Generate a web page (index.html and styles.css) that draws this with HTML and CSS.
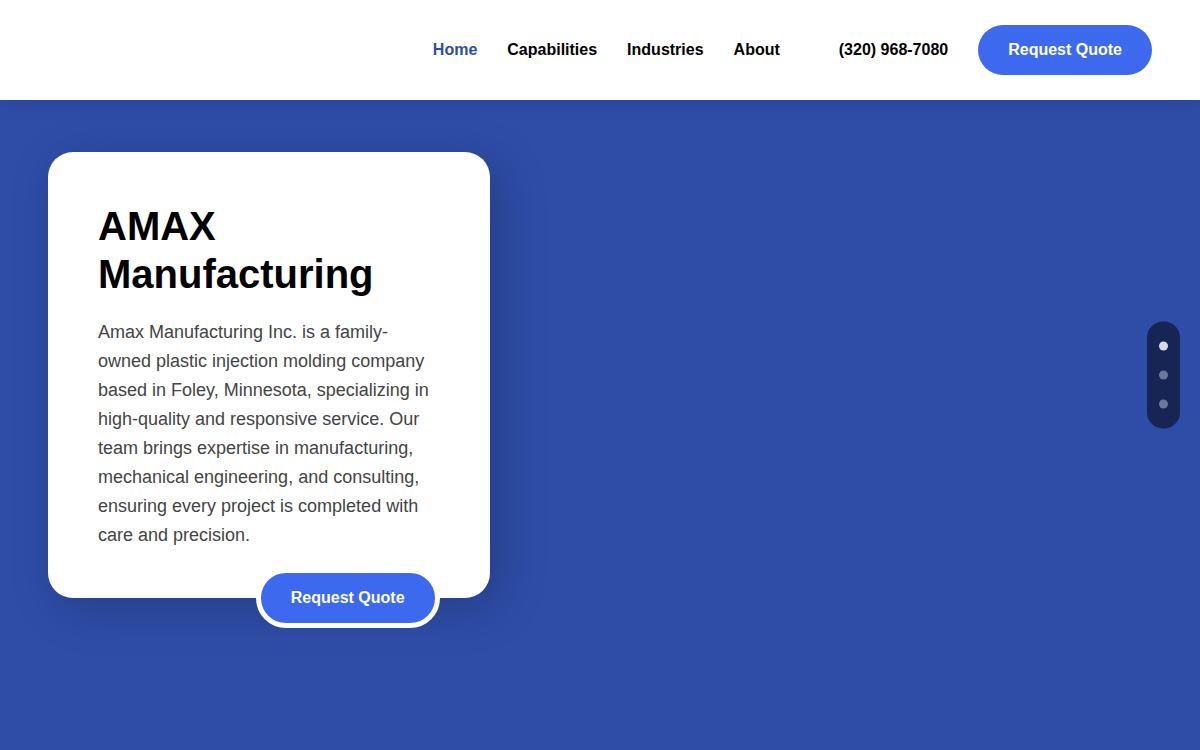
FILE: index.html
```html
<!DOCTYPE html>
<html lang="en">
<head>
	<meta charset="utf-8">
	<meta name="viewport" content="width=device-width, initial-scale=1">
	<title>AMAX Manufacturing</title>
	<link rel="stylesheet" href="styles.css">
</head>
<body>
<header class="header">
	<nav class="nav">
		<a href="#" class="on">Home</a>
		<a href="#">Capabilities</a>
		<a href="#">Industries</a>
		<a href="#">About</a>
	</nav>
	<a href="tel:3209687080" class="phone">(320) 968-7080</a>
	<a href="#" class="btn">Request Quote</a>
</header>
<main class="hero">
	<div class="card">
		<h1>AMAX Manufacturing</h1>
		<p>Amax Manufacturing Inc. is a family-owned plastic injection molding company based in Foley, Minnesota, specializing in high-quality and responsive service. Our team brings expertise in manufacturing, mechanical engineering, and consulting, ensuring every project is completed with care and precision.</p>
		<a href="#" class="btn card-btn">Request Quote</a>
	</div>
</main>
<!-- slide dots -->
<div class="dots">
	<button type="button" class="on" aria-label="Slide 1"></button>
	<button type="button" aria-label="Slide 2"></button>
	<button type="button" aria-label="Slide 3"></button>
</div>
</body>
</html>
```

FILE: styles.css
```css
* {
	margin: 0;
	padding: 0;
	box-sizing: border-box;
}
body {
	font-family: "Liberation Sans", Arial, sans-serif;
	font-size: 16px;
	color: #000;
	background: #2e4da7;
}
a {
	color: #000;
	text-decoration: none;
}

/* header */
.header {
	position: relative;
	z-index: 2;
	display: flex;
	align-items: center;
	justify-content: flex-end;
	gap: 30px;
	padding: 25px 48px;
	font-weight: bold;
	background: #fff;
	box-shadow: 0 0 20px rgba(0,0,0,.15);
}
.nav {
	display: flex;
	gap: 30px;
	margin-right: 29px;
}
.nav .on {
	color: #2e4da7;
}
.btn {
	padding: 0 30px;
	line-height: 50px;
	font-weight: bold;
	color: #fff;
	background: #3d69ee;
	border-radius: 30px;
}
.btn:hover {
	background: #2e4da7;
}

/* hero */
.hero {
	min-height: calc(100vh - 100px);
	padding: 52px 48px;
}
.card {
	position: relative;
	width: 40%;
	min-width: 320px;
	padding: 50px 50px 48px;
	background: #fff;
	border-radius: 25px;
	box-shadow: 10px 10px 50px rgba(0,0,0,.2);
}
.card h1 {
	margin-bottom: 20px;
	font-size: 40px;
	line-height: 48px;
}
.card p {
	font-size: 18px;
	line-height: 29px;
	color: #444;
}
.card-btn {
	position: absolute;
	right: 50px;
	bottom: -30px;
	border: 5px solid #fff;
}

/* dots */
.dots {
	position: fixed;
	z-index: 3;
	top: 50%;
	right: 20px;
	display: flex;
	flex-direction: column;
	gap: 20px;
	padding: 20px 12px;
	background: #172554;
	border-radius: 16px;
	transform: translateY(-50%);
}
.dots button {
	width: 9px;
	height: 9px;
	border: 0;
	border-radius: 50%;
	background: #6b779c;
	cursor: pointer;
}
.dots .on {
	background: #d8dce8;
}
```
